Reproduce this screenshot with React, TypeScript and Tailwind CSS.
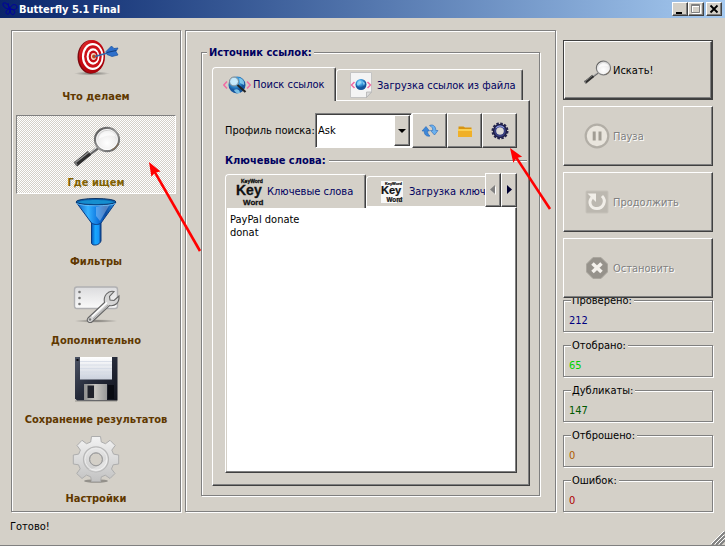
import React from "react";

const raised =
  "border border-t-white border-l-white border-r-[#404040] border-b-[#404040] shadow-[inset_-1px_-1px_0_#808080]";
const etched = "border border-[#808080] shadow-[1px_1px_0_#fff,inset_1px_1px_0_#fff]";

function TargetIcon() {
  return (
    <svg width="48" height="48" viewBox="0 0 48 48" aria-hidden="true">
      <defs>
        <linearGradient id="tg" x1="0" y1="0" x2="1" y2="1">
          <stop offset="0" stopColor="#e8483f" />
          <stop offset="0.3" stopColor="#cc0a12" />
          <stop offset="1" stopColor="#9a0008" />
        </linearGradient>
        <radialGradient id="tshadow">
          <stop offset="0" stopColor="#000" stopOpacity="0.45" />
          <stop offset="1" stopColor="#000" stopOpacity="0" />
        </radialGradient>
      </defs>
      <ellipse cx="20" cy="40.500" rx="18" ry="2" fill="url(#tshadow)" />
      <ellipse cx="18.500" cy="24" rx="13" ry="16.700" fill="#7c0a10" />
      <ellipse cx="20" cy="23.500" rx="13" ry="16.500" fill="url(#tg)" />
      <ellipse cx="20.700" cy="23.500" rx="10.800" ry="13.600" fill="#fff" />
      <ellipse cx="20.900" cy="23.500" rx="8.800" ry="11.200" fill="#cc1018" />
      <ellipse cx="21" cy="23.500" rx="6.400" ry="8.200" fill="#fff" />
      <ellipse cx="21.300" cy="23.500" rx="4.600" ry="6" fill="#c40c14" />
      <ellipse cx="21.500" cy="23.500" rx="2.600" ry="3.400" fill="#f4d8c8" />
      <circle cx="22" cy="23.500" r="1.900" fill="#b8481c" />
      <path d="M23 23.500L37 19.500" stroke="#3568a8" strokeWidth="1.600" />
      <path d="M34 18.500L39.500 13l2.500 2.500 4-.500-2 3.500 2 3.500-6 1.500-5-2z" fill="#2d6fcb" stroke="#174f9c" strokeWidth=".7" />
      <path d="M35 19.500l9-2" stroke="#123f80" strokeWidth="1.200" />
    </svg>
  );
}

function Magnifier({ size }: { size: number }) {
  return (
    <svg width={size} height={size} viewBox="0 0 48 48" aria-hidden="true">
      <defs>
        <radialGradient id="lens" cx=".5" cy=".65" r=".7">
          <stop offset="0" stopColor="#fff" />
          <stop offset=".55" stopColor="#efeeee" />
          <stop offset="1" stopColor="#b0b0b0" />
        </radialGradient>
        <linearGradient id="rim" x1="0" y1="0" x2="1" y2="1">
          <stop offset="0" stopColor="#4a4a4a" />
          <stop offset=".5" stopColor="#999" />
          <stop offset="1" stopColor="#5a5a5a" />
        </linearGradient>
      </defs>
      <path d="M26 29L15 37" stroke="#666" strokeWidth="3" />
      <path d="M25.500 28L15 36" stroke="#ddd" strokeWidth="1" />
      <path d="M17.500 34L3.500 45.500" stroke="#2d2d2d" strokeWidth="5" />
      <path d="M17 33L3 44" stroke="#999" strokeWidth="1.200" />
      <path d="M2.500 42.500l2.500 4" stroke="#777" strokeWidth="2" />
      <ellipse cx="35" cy="20.500" rx="12" ry="11.700" fill="url(#lens)" stroke="url(#rim)" strokeWidth="2.200" />
      <ellipse cx="35" cy="20.500" rx="10.400" ry="10.100" fill="none" stroke="#fff" strokeOpacity=".8" />
      <path d="M27 20c0-10 15-11 17-2-6-3-12-1-17 2z" fill="#fff" opacity=".7" />
      <path d="M40 30.500c3-1 5-3 6-6" fill="none" stroke="#8d7355" strokeWidth="1" />
    </svg>
  );
}

function FunnelIcon() {
  return (
    <svg width="48" height="48" viewBox="0 0 48 48" aria-hidden="true">
      <defs>
        <linearGradient id="fun" x1="0" x2="1">
          <stop offset="0" stopColor="#0b58b8" />
          <stop offset=".3" stopColor="#35b2ff" />
          <stop offset=".55" stopColor="#0c75df" />
          <stop offset=".75" stopColor="#0b4aa0" />
          <stop offset="1" stopColor="#2aa0f4" />
        </linearGradient>
        <linearGradient id="stem" x1="0" x2="1">
          <stop offset="0" stopColor="#0452b8" />
          <stop offset=".4" stopColor="#18a8ff" />
          <stop offset=".75" stopColor="#1596f8" />
          <stop offset="1" stopColor="#0a3c88" />
        </linearGradient>
      </defs>
      <path d="M19.500 24v21c0 3 8 3 9.500-2V24z" fill="url(#stem)" stroke="#093a80" strokeWidth="1" />
      <path d="M4 4L19.500 25c3 2 7 2 9.500 0L44 4z" fill="url(#fun)" stroke="#0a3d85" strokeWidth="1" />
      <path d="M24 9l14-3-10 17-4-5z" fill="#d5e7ff" opacity=".35" />
      <ellipse cx="24" cy="3.800" rx="20" ry="3.300" fill="#0a62ae" stroke="#0b3264" strokeWidth="1" />
      <path d="M6 4.200c5-3 30-3 36 0-8 2.300-28 2.300-36 0z" fill="#168fcf" />
      <path d="M4.500 5.500c6 3 33 3 39 0" fill="none" stroke="#74c8ff" strokeWidth=".8" />
    </svg>
  );
}

function WrenchIcon() {
  return (
    <svg width="48" height="48" viewBox="0 0 48 48" aria-hidden="true">
      <defs>
        <linearGradient id="card" x1="0" y1="0" x2="0" y2="1">
          <stop offset="0" stopColor="#dcdcde" />
          <stop offset="1" stopColor="#fafafa" />
        </linearGradient>
        <radialGradient id="wshadow">
          <stop offset="0" stopColor="#000" stopOpacity=".45" />
          <stop offset="1" stopColor="#000" stopOpacity="0" />
        </radialGradient>
      </defs>
      <g transform="translate(0 4)">
        <ellipse cx="24" cy="40" rx="22" ry="1.800" fill="url(#wshadow)" />
        <rect x="2.500" y="6" width="43" height="21.500" rx="2.500" fill="url(#card)" stroke="#b0b0b2" strokeWidth="1.400" />
        <circle cx="7.500" cy="11" r="1.300" fill="#777" />
        <circle cx="7.500" cy="17" r="1.300" fill="#777" />
        <circle cx="7.500" cy="23" r="1.300" fill="#777" />
        <path d="M16 37L32.500 21.500C31 15 36 9 42 10.500l-4.500 5 .5 3.500 4 .5 5-4.500c.5 7-4 10.500-9.500 9.500L20.500 40.500c-3 2.500-7-.5-4.500-3.500z" fill="#d6d6d6" stroke="#656565" strokeWidth="1.100" />
        <path d="M20 35.500L35 21.500" stroke="#fff" strokeWidth="1.600" />
        <path d="M21 38L36 24" stroke="#999" strokeWidth=".8" />
        <circle cx="18" cy="38.500" r="1.200" fill="#777" />
      </g>
    </svg>
  );
}

function FloppyIcon() {
  return (
    <svg width="48" height="48" viewBox="0 0 48 48" aria-hidden="true">
      <defs>
        <linearGradient id="fl" x1="0" y1="0" x2="1" y2="1">
          <stop offset="0" stopColor="#4c5364" />
          <stop offset=".5" stopColor="#252a39" />
          <stop offset="1" stopColor="#11131c" />
        </linearGradient>
        <linearGradient id="fm" x1="0" x2="1">
          <stop offset="0" stopColor="#8e8e8e" />
          <stop offset=".5" stopColor="#c7c5c0" />
          <stop offset="1" stopColor="#999" />
        </linearGradient>
        <linearGradient id="fp" x1="0" y1="0" x2="0" y2="1">
          <stop offset="0" stopColor="#fff" />
          <stop offset="1" stopColor="#cbd1dd" />
        </linearGradient>
      </defs>
      <rect x="3" y="44" width="42" height="2" fill="#000" opacity=".15" />
      <path d="M3 1h42.500v43.500H5L3 42.500z" fill="url(#fl)" />
      <rect x="8" y="1" width="32" height="22.500" fill="url(#fp)" />
      <path d="M8 5.500h32M8 9h32M8 12.500h32M8 16h32M8 19.500h32" stroke="#d3d9e5" strokeWidth=".8" />
      <rect x="12" y="28" width="23" height="16" fill="url(#fm)" />
      <rect x="15.500" y="29.500" width="6.500" height="12.500" fill="#20222b" />
      <rect x="36" y="29" width="6" height="14" fill="#090b12" />
      <rect x="4.500" y="3" width="2" height="2" fill="#0a0b10" />
    </svg>
  );
}

function GearIcon() {
  return (
    <svg width="48" height="48" viewBox="0 0 48 48" aria-hidden="true">
      <defs>
        <linearGradient id="gr" x1="0" y1="0" x2="0" y2="1">
          <stop offset="0" stopColor="#f3f3f3" />
          <stop offset="1" stopColor="#c2c2c2" />
        </linearGradient>
      </defs>
      <ellipse cx="24" cy="46" rx="12" ry="1.800" fill="#000" opacity=".3" />
      <path
        fillRule="evenodd"
        d="M19.500 1.500h9l.8 5.500 4.200 1.700L38 5.300l5.200 5.200-3.400 4.600 1.700 4 5.200.9v9l-5.500.8-1.700 4.200 3.500 4.500-5 5-4.700-3.300-4 1.700-.8 4.600h-9l-.8-4.700-4.200-1.700L10 43.500l-5.300-5 3.500-4.700-1.700-4-5.200-.8v-9l5.400-.9 1.700-4L5 10.500l5-5.200 4.500 3.400L18.700 7zM24 18a6.300 6.300 0 100 12.600A6.300 6.300 0 0024 18z"
        fill="url(#gr)"
        stroke="#adadad"
        strokeWidth="1"
      />
      <circle cx="24" cy="24.300" r="12.500" fill="none" stroke="#b8b8b8" strokeWidth="1.200" />
      <circle cx="24" cy="24.300" r="11" fill="none" stroke="#ececec" strokeWidth="1" />
      <circle cx="24" cy="24.300" r="6.500" fill="none" stroke="#9b9b9b" strokeWidth="1" />
      <path d="M16 34c8 0 15-5 19-11 2 10-9 18-19 11z" fill="#fff" opacity=".35" />
    </svg>
  );
}

function Globe({ glass }: { glass: boolean }) {
  return (
    <svg width="28" height="26" viewBox="0 0 28 26" aria-hidden="true">
      <defs>
        <radialGradient id="gl" cx=".4" cy=".3">
          <stop offset="0" stopColor="#b8ebff" />
          <stop offset=".5" stopColor="#3b9fe3" />
          <stop offset="1" stopColor="#14549c" />
        </radialGradient>
      </defs>
      {!glass && <path d="M3.500.5h21V20l-5 5.500h-16z" fill="#f4f4f4" stroke="#c4c4c4" />}
      {!glass && <path d="M24.500 20h-5v5.500z" fill="#ddd" stroke="#aaa" strokeWidth=".7" />}
      <path d={glass ? "M4 9.500L.8 13 4 16.500M24 9.500l3.200 3.500-3.200 3.500" : "M7.500 10L4.500 13l3 3M20.500 10l3 3-3 3"} fill="none" stroke="#f06ca4" strokeWidth="1.500" />
      <circle cx="14" cy={glass ? 13 : 12.500} r={glass ? 8.500 : 5.500} fill="url(#gl)" />
      <path d={glass ? "M8 8c3-4 6-1 5 2s-4 4-6 2zM16 6c4 0 6 4 5 7l-4-2zM11 18c3-2 6 0 6 3-2 1-5 0-6-3z" : "M10 11c2-3 4-1 3 1s-2 2-3 1zM15 9l3 2-1 3z"} fill="#93d9f7" opacity=".8" />
      {glass && (
        <g>
          <circle cx="11" cy="9.500" r="4.500" fill="#d9f0fc" fillOpacity=".75" stroke="#77838c" strokeWidth="1" />
          <path d="M14.500 13l8 7" stroke="#222" strokeWidth="2.200" />
        </g>
      )}
    </svg>
  );
}

function KeyIcon({ page }: { page: boolean }) {
  return (
    <svg width={page ? 22 : 28} height={page ? 26 : 28} viewBox="0 0 28 28" preserveAspectRatio="xMidYMid meet" aria-hidden="true">
      {page && <path d="M0 0h28v24l-6 4H0z" fill="#f7f7f7" />}
      {page && <path d="M28 22l-7 6v-6z" fill="#ccc" stroke="#999" strokeWidth=".6" />}
      <g fontFamily="Liberation Sans, Arial, sans-serif" fontWeight="700" fill="#111" stroke="#111" strokeWidth=".3">
        <text x="5" y="5" fontSize="5">KeyWord</text>
        <text x="0" y="17" fontSize="14">Key</text>
        <text x="7" y="27" fontSize="8">Word</text>
      </g>
    </svg>
  );
}

function RefreshIcon() {
  return (
    <svg width="18" height="16" viewBox="0 0 18 16" aria-hidden="true">
      <path d="M1 8l4-4.500L8.500 8H6.500c0 2 1 4 2.500 5-4 1-6-2-5.800-5z" fill="#3d87d8" stroke="#2a68b5" strokeWidth=".6" />
      <path d="M17 7.500l-3.500 4.500-4-4.500h2.200C12 5 10.500 3.500 8.500 2.500c4-1.800 6.500 1.500 6.300 5z" fill="#6bb1ef" stroke="#2a68b5" strokeWidth=".6" />
    </svg>
  );
}

function FolderIcon() {
  return (
    <svg width="16" height="14" viewBox="0 0 16 14" aria-hidden="true">
      <path d="M1.500 2.500h5l1.500 1h6.500v9h-13z" fill="#d89410" />
      <path d="M1 5h14v8H1z" fill="#f0b028" />
      <path d="M1 5h14v2H1z" fill="#fbd052" />
    </svg>
  );
}

function CogIcon() {
  return (
    <svg width="18" height="18" viewBox="0 0 18 18" aria-hidden="true">
      <circle cx="9" cy="9" r="7.200" fill="none" stroke="#24244c" strokeWidth="2.600" strokeDasharray="2.400 1.370" />
      <circle cx="9" cy="9" r="5.300" fill="none" stroke="#3a4080" strokeWidth="3.400" />
      <circle cx="9" cy="9" r="6.500" fill="none" stroke="#1c1c40" strokeWidth="1.200" />
      <circle cx="9" cy="9" r="3.600" fill="#dcdad6" />
      <path d="M5 6a5 5 0 018 0" fill="none" stroke="#8e9be0" strokeWidth="1.200" />
    </svg>
  );
}

function PauseIcon() {
  return (
    <svg width="28" height="28" viewBox="0 0 28 28" aria-hidden="true">
      <circle cx="14" cy="14" r="11.300" fill="#e9e5dd" stroke="#b2aea6" strokeWidth="2.200" />
      <path d="M11.200 9.500v9M17 9.500v9" stroke="#a19d94" strokeWidth="3" />
    </svg>
  );
}

function ResumeIcon() {
  return (
    <svg width="28" height="28" viewBox="0 0 28 28" aria-hidden="true">
      <rect x="3" y="3" width="22" height="22" rx="1" fill="#bcb8b0" stroke="#c6c2ba" />
      <path d="M19 8c5 5 1 12.500-5 12.500S4.500 15 9 9.500" fill="none" stroke="#f1eee8" strokeWidth="3" />
      <path d="M4.500 5.500H13V14z" fill="#f1eee8" />
    </svg>
  );
}

function StopIcon() {
  return (
    <svg width="28" height="28" viewBox="0 0 28 28" aria-hidden="true">
      <path d="M10 3.500h8l6.500 6.500v8L18 24.500h-8L3.500 18v-8z" fill="#96928b" stroke="#aaa69e" />
      <path d="M9.500 9.500l9 8.500M18.500 9.500l-9 8.500" stroke="#f4f1ec" strokeWidth="3.600" />
    </svg>
  );
}

function Arrow({ place, x, y }: { place: string; x: number; y: number }) {
  const angle = Math.atan2(y, x);
  const turn = (a: number, r: number) => `${4 + r * Math.cos(angle + a)},${4 + r * Math.sin(angle + a)}`;
  return (
    <svg className={`pointer-events-none absolute z-30 ${place}`} width={x + 8} height={y + 8} aria-hidden="true">
      <line x1={4 + x * 0.1} y1={4 + y * 0.1} x2={x + 4} y2={y + 4} stroke="#f00" strokeWidth="2.600" />
      <polygon points={`4,4 ${turn(0.36, 15)} ${turn(0, 12)} ${turn(-0.36, 15)}`} fill="#f00" />
    </svg>
  );
}

const sections = [
  { label: "Что делаем", icon: <TargetIcon /> },
  { label: "Где ищем", icon: <Magnifier size={48} /> },
  { label: "Фильтры", icon: <FunnelIcon /> },
  { label: "Дополнительно", icon: <WrenchIcon /> },
  { label: "Сохранение результатов", icon: <FloppyIcon /> },
  { label: "Настройки", icon: <GearIcon /> },
];

const actions = [
  { label: "Искать!", icon: <Magnifier size={28} /> },
  { label: "Пауза", icon: <PauseIcon /> },
  { label: "Продолжить", icon: <ResumeIcon /> },
  { label: "Остановить", icon: <StopIcon /> },
];

const stats = [
  { label: "Проверено:", value: "212", color: "text-[#000080]" },
  { label: "Отобрано:", value: "65", color: "text-[#00d000]" },
  { label: "Дубликаты:", value: "147", color: "text-[#005800]" },
  { label: "Отброшено:", value: "0", color: "text-[#b05c00]" },
  { label: "Ошибок:", value: "0", color: "text-[#b00000]" },
];

function TitleBar() {
  const button = `flex h-[14px] w-4 items-center justify-center bg-[#d4d0c8] ${raised}`;
  return (
    <header className="flex h-[18px] items-center bg-linear-to-r from-[#0a246a] to-[#a6caf0] pr-[3px] pl-[2px]">
      <svg width="16" height="16" viewBox="0 0 16 16" fill="none" stroke="#0000a0" strokeWidth="1" aria-hidden="true">
        <path d="M8 8C5 0 0 1 1 4s4 4 7 4c-4 0-5 4-3 5s3-2 3-5zM8 8c1-6 7-5 7-2s-4 3-7 2c4 0 6 3 4 5s-4-1-4-5zM7 7L6 2" />
      </svg>
      <h1 className="ml-px flex-1 font-bold text-white">Butterfly 5.1 Final</h1>
      <button className={button} aria-label="Свернуть">
        <svg width="12" height="10"><path d="M2 8h6v2H2z" fill="#000" /></svg>
      </button>
      <button className={button} aria-label="Развернуть" disabled>
        <svg width="12" height="10" fill="none">
          <path d="M2.500 1v8.500h8V1.500h-8M2 2.500h9" stroke="#fff" />
          <path d="M1.500.5h8v8h-8zM1 1.500h9" stroke="#808080" />
        </svg>
      </button>
      <button className={`ml-[2px] ${button}`} aria-label="Закрыть">
        <svg width="12" height="10"><path d="M2.500 1.500l7 7M9.500 1.500l-7 7" stroke="#000" strokeWidth="1.800" /></svg>
      </button>
    </header>
  );
}

function Sidebar() {
  return (
    <nav className={`flex w-[170px] shrink-0 flex-col px-1 ${etched}`}>
      {sections.map(({ label, icon }, i) => {
        const active = i === 1;
        const look = active
          ? "h-[79px] pt-[3px] border-t-[#808080] border-l-[#808080] border-r-white border-b-white text-[#806000] bg-[repeating-conic-gradient(#fff_0_25%,#d4d0c8_0_50%)] bg-[length:2px_2px]"
          : i === 0
            ? "h-[84px] pt-px border-transparent text-[#603800]"
            : "h-[79px] pt-[3px] border-transparent text-[#603800]";
        return (
          <button
            key={label}
            aria-pressed={active}
            className={`relative flex shrink-0 flex-col items-center border font-bold whitespace-nowrap ${look}`}
          >
            {icon}
            <span className="mt-[9px]">{label}</span>
            {active && <Arrow place="top-[42px] left-[128px]" x={51} y={89} />}
          </button>
        );
      })}
    </nav>
  );
}

function Tab({ selected, className, children }: { selected?: boolean; className: string; children: React.ReactNode }) {
  return (
    <button
      role="tab"
      aria-selected={!!selected}
      className={`flex items-center rounded-tl-sm rounded-tr-xs border border-b-0 border-t-white border-l-white border-r-[#404040] whitespace-nowrap text-[#000060] shadow-[inset_-1px_0_0_#808080] bg-[#d4d0c8] ${
        selected ? "relative z-10 -mb-px" : "border-l-transparent"
      } ${className}`}
    >
      {children}
    </button>
  );
}

function KeywordTabs() {
  const scroll = `flex h-[34px] w-4 shrink-0 items-center justify-center ${raised}`;
  return (
    <section className="flex flex-1 flex-col" aria-labelledby="keywords-title">
      <div className="-mr-[10px] flex items-center gap-[3px] font-bold text-[#000060]">
        <h2 id="keywords-title">Ключевые слова:</h2>
        <div className="h-[2px] flex-1 border-t border-[#808080] bg-white" />
      </div>
      <div role="tablist" className="mt-[6px] flex h-[34px] items-end">
        <Tab selected className="h-[34px] w-[141px] shrink-0 gap-[3px] pl-[10px]">
          <KeyIcon page={false} />
          Ключевые слова
        </Tab>
        <div className="flex min-w-0 flex-1 overflow-hidden border-b border-white">
          <Tab className="h-[30px] w-[190px] shrink-0 gap-[6px] pl-[14px]">
            <KeyIcon page />
            Загрузка ключевых слов
          </Tab>
        </div>
        <button className={scroll} aria-label="Предыдущая вкладка">
          <svg width="7" height="10"><path d="M6 1v9L2 6z" fill="#fff" /><path d="M5 0v9L0 4.500z" fill="#808080" /></svg>
        </button>
        <button className={scroll} aria-label="Следующая вкладка">
          <svg width="7" height="10"><path d="M1 0v9l5-4.500z" fill="#000030" /></svg>
        </button>
      </div>
      <textarea
        aria-label="Ключевые слова"
        defaultValue={"PayPal donate\ndonat"}
        spellCheck={false}
        className="block w-full flex-1 resize-none border border-t-white border-l-white border-r-[#404040] border-b-[#404040] bg-white pt-[5px] pl-1 text-black shadow-[inset_-1px_-1px_0_#808080,inset_1px_0_0_#d4d0c8] outline-none"
      />
    </section>
  );
}

function SearchPage() {
  const tool = `relative flex h-[35px] w-[35px] shrink-0 items-center justify-center ${raised}`;
  return (
    <div role="tabpanel" className={`flex flex-1 flex-col gap-[6px] p-3 ${raised}`}>
      <div className="flex items-center">
        <label htmlFor="profile" className="w-[90px] shrink-0 whitespace-nowrap">Профиль поиска:</label>
        <div className="relative min-w-0 flex-1">
          <select
            id="profile"
            className="block h-[35px] w-full appearance-none border border-t-[#808080] border-l-[#808080] border-r-white border-b-white bg-white pl-[2px] shadow-[inset_1px_1px_0_#404040] outline-none"
          >
            <option>Ask</option>
          </select>
          <span className={`pointer-events-none absolute top-[2px] right-[2px] flex h-[31px] w-4 items-center justify-center bg-[#d4d0c8] ${raised}`}>
            <svg width="8" height="4"><path d="M0 0h8L4 4z" fill="#000" /></svg>
          </span>
        </div>
        <button className={tool} aria-label="Обновить"><RefreshIcon /></button>
        <button className={tool} aria-label="Открыть папку"><FolderIcon /></button>
        <button className={tool} aria-label="Настроить профиль">
          <CogIcon />
          <Arrow place="top-[30px] left-[23px]" x={40} y={61} />
        </button>
      </div>
      <KeywordTabs />
    </div>
  );
}

function SourcePanel() {
  return (
    <main className={`ml-1 flex min-w-0 flex-1 flex-col p-[15px] ${etched}`}>
      <fieldset className={`flex min-w-0 flex-1 flex-col pt-2 pr-[9px] pb-[9px] pl-[10px] ${etched}`}>
        <legend className="-ml-[5px] bg-[#d4d0c8] px-[2px] font-bold text-[#000060]">Источник ссылок:</legend>
        <div role="tablist" className="flex h-[33px] items-end">
          <Tab selected className="h-[34px] w-[124px] shrink-0 gap-[2px] pl-[10px]">
            <Globe glass />
            Поиск ссылок
          </Tab>
          <Tab className="h-[31px] w-[187px] gap-[2px] pl-[10px]">
            <Globe glass={false} />
            Загрузка ссылок из файла
          </Tab>
        </div>
        <SearchPage />
      </fieldset>
    </main>
  );
}

function ControlColumn() {
  return (
    <aside className="ml-[7px] flex w-[150px] shrink-0 flex-col pt-[10px]">
      <div className="relative z-10 flex flex-col gap-[6px]">
        {actions.map(({ label, icon }, i) => (
          <div key={label} className={`bg-[#d4d0c8] ${i === 0 ? "border border-[#404040]" : ""}`}>
            <button
              disabled={i > 0}
              className={`flex w-full items-center gap-[2px] ${raised} ${
                i > 0 ? "h-[60px] pl-[19px] text-[#808080] [text-shadow:1px_1px_0_#fff]" : "h-[58px] pl-[18px]"
              }`}
            >
              {icon}
              {label}
            </button>
          </div>
        ))}
      </div>
      <div className="-mt-1 flex flex-col gap-[7px]">
        {stats.map(({ label, value, color }) => (
          <fieldset key={label} className={`h-[38px] px-[5px] pt-[7px] ${etched}`}>
            <legend className="ml-[2px] bg-[#d4d0c8] pr-[2px] pl-px">{label}</legend>
            <output className={`block ${color}`}>{value}</output>
          </fieldset>
        ))}
      </div>
    </aside>
  );
}

export default function App() {
  return (
    <div className="flex min-h-screen w-full flex-col overflow-hidden bg-[#d4d0c8] font-['DejaVu_Sans_Condensed','DejaVu_Sans',sans-serif] text-[11px] leading-[13px] text-black">
      <TitleBar />
      <div className="flex flex-1 pt-3 pr-3 pl-[11px]">
        <Sidebar />
        <SourcePanel />
        <ControlColumn />
      </div>
      <footer className="flex h-[34px] items-start border-b border-[#808080] pt-2 pl-[10px]">
        <span className="flex-1">Готово!</span>
        <svg className="self-end" width="14" height="14" aria-hidden="true">
          <path d="M1 14L14 1M5 14l9-9M9 14l5-5" stroke="#808080" strokeWidth="2" />
          <path d="M0 13L13 0M4 13l9-9M8 13l6-6" stroke="#fff" strokeWidth="1" />
        </svg>
      </footer>
    </div>
  );
}
